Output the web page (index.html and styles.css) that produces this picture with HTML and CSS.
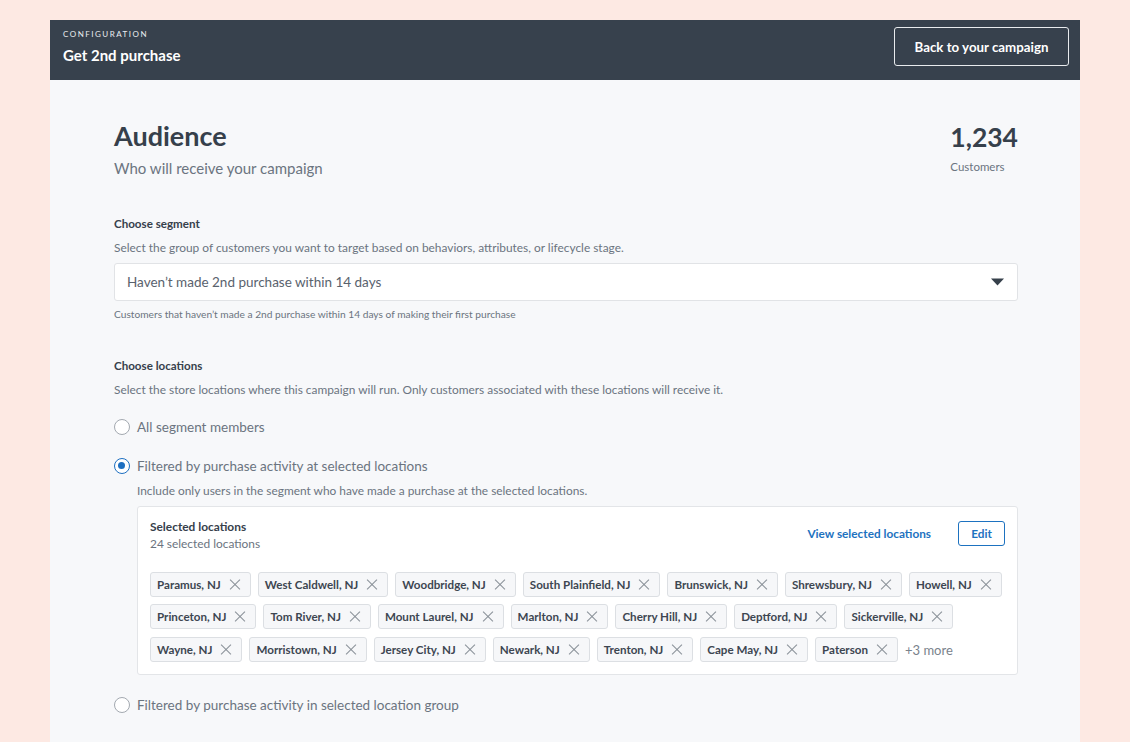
FILE: index.html
```html
<!DOCTYPE html>
<html lang="en">
<head>
<meta charset="utf-8">
<title>Get 2nd purchase</title>
<link rel="stylesheet" href="styles.css">
</head>
<body>
<div class="frame">
  <header class="topbar">
    <div class="topbar-titles">
      <div class="eyebrow">CONFIGURATION</div>
      <div class="page-title">Get 2nd purchase</div>
    </div>
    <button class="btn-outline-light">Back to your campaign</button>
  </header>

  <main class="content">
    <section class="audience-head">
      <div>
        <h1 class="h1">Audience</h1>
        <p class="subtitle">Who will receive your campaign</p>
      </div>
      <div class="count">
        <div class="count-num">1,234</div>
        <div class="count-label">Customers</div>
      </div>
    </section>

    <section class="field seg">
      <div class="label">Choose segment</div>
      <div class="desc">Select the group of customers you want to target based on behaviors, attributes, or lifecycle stage.</div>
      <div class="select">
        <span>Haven’t made 2nd purchase within 14 days</span>
        <svg class="caret" width="13" height="8" viewBox="0 0 13 8"><path d="M0 0.5 H13 L6.5 7.5 Z" fill="#36404b"/></svg>
      </div>
      <div class="helper">Customers that haven’t made a 2nd purchase within 14 days of making their first purchase</div>
    </section>

    <section class="field loc">
      <div class="label">Choose locations</div>
      <div class="desc">Select the store locations where this campaign will run. Only customers associated with these locations will receive it.</div>

      <label class="radio r1"><span class="dot"></span>All segment members</label>
      <label class="radio r2"><span class="dot on"></span>Filtered by purchase activity at selected locations</label>
      <div class="desc indent">Include only users in the segment who have made a purchase at the selected locations.</div>

      <div class="card">
        <div class="card-head">
          <div>
            <div class="card-title">Selected locations</div>
            <div class="card-sub">24 selected locations</div>
          </div>
          <div class="card-actions">
            <a class="link">View selected locations</a>
            <button class="btn-outline-blue">Edit</button>
          </div>
        </div>
        <div class="chips">
          <div class="chip-row">
            <span class="chip">Paramus, NJ<i class="x"></i></span>
            <span class="chip">West Caldwell, NJ<i class="x"></i></span>
            <span class="chip">Woodbridge, NJ<i class="x"></i></span>
            <span class="chip">South Plainfield, NJ<i class="x"></i></span>
            <span class="chip">Brunswick, NJ<i class="x"></i></span>
            <span class="chip">Shrewsbury, NJ<i class="x"></i></span>
            <span class="chip">Howell, NJ<i class="x"></i></span>
          </div>
          <div class="chip-row">
            <span class="chip">Princeton, NJ<i class="x"></i></span>
            <span class="chip">Tom River, NJ<i class="x"></i></span>
            <span class="chip">Mount Laurel, NJ<i class="x"></i></span>
            <span class="chip">Marlton, NJ<i class="x"></i></span>
            <span class="chip">Cherry Hill, NJ<i class="x"></i></span>
            <span class="chip">Deptford, NJ<i class="x"></i></span>
            <span class="chip">Sickerville, NJ<i class="x"></i></span>
          </div>
          <div class="chip-row">
            <span class="chip">Wayne, NJ<i class="x"></i></span>
            <span class="chip">Morristown, NJ<i class="x"></i></span>
            <span class="chip">Jersey City, NJ<i class="x"></i></span>
            <span class="chip">Newark, NJ<i class="x"></i></span>
            <span class="chip">Trenton, NJ<i class="x"></i></span>
            <span class="chip">Cape May, NJ<i class="x"></i></span>
            <span class="chip">Paterson<i class="x"></i></span>
            <span class="more">+3 more</span>
          </div>
        </div>
      </div>

      <label class="radio r3"><span class="dot"></span>Filtered by purchase activity in selected location group</label>
    </section>
  </main>
</div>
</body>
</html>
```

FILE: styles.css
```css
* { box-sizing: border-box; }
html, body { margin: 0; padding: 0; }
body {
  background: #fde9e3;
  font-family: Lato, "Open Sans", "Liberation Sans", sans-serif;
  color: #36404b;
  height: 742px;
  overflow: hidden;
  padding-top: 20px;
}
.frame {
  width: 1030px;
  margin: 0 auto;
  background: #f7f8fa;
  min-height: 722px;
}
.topbar {
  height: 60px;
  background: #37414d;
  display: flex;
  justify-content: space-between;
  align-items: flex-start;
  padding: 0 11px 0 13px;
}
.topbar-titles { padding-top: 9px; }
.eyebrow {
  color: #e9ecef;
  font-size: 8px;
  letter-spacing: 1.5px;
  line-height: 10px;
}
.page-title {
  color: #fff;
  font-size: 15px;
  font-weight: 700;
  line-height: 20px;
  margin-top: 6px;
}
.btn-outline-light {
  margin-top: 7px;
  height: 39px;
  width: 175px;
  background: transparent;
  border: 1.5px solid #e8ebee;
  border-radius: 3px;
  color: #fff;
  font-family: inherit;
  font-weight: 700;
  font-size: 13.3px;
  padding: 0;
}
.content { padding: 40px 62px 0 64px; }
.audience-head {
  display: flex;
  justify-content: space-between;
  align-items: flex-start;
}
.h1 {
  margin: 0;
  font-size: 27px;
  line-height: 32px;
  font-weight: 700;
  color: #36404b;
}
.subtitle {
  margin: 6px 0 0;
  font-size: 15px;
  line-height: 20px;
  color: #6b7480;
}
.count { padding-top: 1px; }
.count-num {
  font-size: 26.5px;
  font-weight: 700;
  line-height: 32px;
  color: #36404b;
}
.count-label {
  margin-top: 7px;
  font-size: 11.5px;
  line-height: 14px;
  color: #6b7480;
}
.field.seg { margin-top: 38px; }
.label {
  font-size: 11.6px;
  font-weight: 700;
  line-height: 16px;
  color: #36404b;
}
.desc {
  margin-top: 8px;
  font-size: 11.9px;
  line-height: 16px;
  color: #6b7480;
}
.select {
  margin-top: 7px;
  height: 38px;
  background: #fff;
  border: 1px solid #e1e3e6;
  border-radius: 3px;
  display: flex;
  align-items: center;
  justify-content: space-between;
  padding: 0 13px 0 12px;
  font-size: 13.5px;
  color: #59626d;
}
.helper {
  margin-top: 6px;
  font-size: 10.2px;
  line-height: 14px;
  color: #6b7480;
}
.field.loc { margin-top: 37px; }
.radio {
  display: flex;
  align-items: center;
  gap: 7px;
  font-size: 13.5px;
  line-height: 20px;
  color: #6b7480;
}
.r1 { margin-top: 19px; }
.r2 { margin-top: 19px; }
.r3 { margin-top: 20px; }
.dot {
  width: 16px;
  height: 16px;
  border-radius: 50%;
  border: 1px solid #a3a9b0;
  background: #fff;
  flex: none;
  position: relative;
}
.dot.on { border: 1.5px solid #1d6fc1; }
.dot.on::after {
  content: "";
  position: absolute;
  left: 3px; top: 3px;
  width: 7px; height: 7px;
  border-radius: 50%;
  background: #1d6fc1;
}
.desc.indent { margin-left: 23px; margin-top: 7px; }
.card {
  margin: 7px 0 0 23px;
  background: #fff;
  border: 1px solid #e3e5e8;
  border-radius: 3px;
  padding: 12px 12px 12px 12px;
}
.card-head {
  display: flex;
  justify-content: space-between;
  align-items: center;
}
.card-title {
  font-size: 11.9px;
  font-weight: 700;
  line-height: 16px;
  color: #36404b;
}
.card-sub {
  margin-top: 1px;
  font-size: 11.9px;
  line-height: 16px;
  color: #6b7480;
}
.card-actions {
  display: flex;
  align-items: center;
  gap: 27px;
  margin-top: -5px;
}
.link {
  color: #1d72c0;
  font-size: 11.8px;
  font-weight: 700;
}
.btn-outline-blue {
  width: 47px;
  height: 25px;
  background: #fff;
  border: 1.5px solid #1d72c0;
  border-radius: 3px;
  color: #1d72c0;
  font-family: inherit;
  font-weight: 700;
  font-size: 11.8px;
  padding: 0;
}
.chips {
  margin-top: 20px;
  display: flex;
  flex-direction: column;
  gap: 7px;
}
.chip-row {
  display: flex;
  gap: 7px;
  align-items: center;
}
.chip-row + .chip-row + .chip-row { margin-top: 1px; }
.chip {
  height: 25px;
  display: inline-flex;
  align-items: center;
  background: #f6f7f9;
  border: 1px solid #dcdfe3;
  border-radius: 3px;
  padding: 0 10px 0 6px;
  font-size: 11.6px;
  font-weight: 700;
  color: #3d4651;
  white-space: nowrap;
}
.x {
  width: 10px;
  height: 10px;
  margin-left: 9px;
  position: relative;
  flex: none;
}
.x::before, .x::after {
  content: "";
  position: absolute;
  left: -2px;
  top: 4.5px;
  width: 14px;
  height: 1px;
  background: #8a9199;
  transform: rotate(45deg);
}
.x::after { transform: rotate(-45deg); }
.more {
  font-size: 13px;
  color: #7a828c;
}
```
